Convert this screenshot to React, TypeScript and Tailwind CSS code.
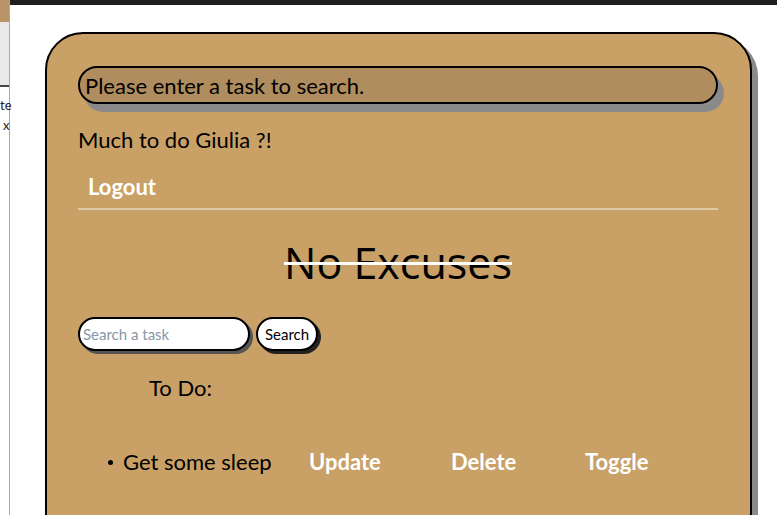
const FONT = { fontFamily: 'Lato, "Noto Sans", sans-serif' };

function SideStrip() {
  return (
    <div className="flex w-[10px] shrink-0 flex-col border-r border-[#a8a8a8] bg-[#ececec]">
      <div className="h-[22px] shrink-0 bg-[#b89466]" />
      <div className="h-[63px] shrink-0 bg-[#e9e9e9]" />
      <div className="h-[2px] shrink-0 bg-[#444]" />
      <div className="flex flex-1 flex-col bg-white pt-[8px] text-[13px] leading-[20px] text-[#222]" style={FONT}>
        <span>te</span>
        <span className="pl-[3px]">x</span>
      </div>
    </div>
  );
}

function TaskRow({ title }: { title: string }) {
  return (
    <li className="flex items-center text-[22px] leading-none">
      <span className="mr-[10px] h-[5px] w-[5px] rounded-full bg-black" />
      <span className="w-[186px] text-black">{title}</span>
      <button className="w-[142px] text-left font-bold text-white">Update</button>
      <button className="w-[134px] text-left font-bold text-white">Delete</button>
      <button className="text-left font-bold text-white">Toggle</button>
    </li>
  );
}

export default function App() {
  return (
    <div className="flex h-[515px] w-[777px] overflow-hidden bg-white" style={FONT}>
      <SideStrip />
      <div className="flex flex-1 flex-col">
        <div className="h-[5px] shrink-0 bg-[#1e1e1e]" />
        <div className="flex-1 pl-[35px] pt-[27px]">
          <div className="h-[560px] w-[707px] rounded-[38px] border-2 border-black bg-[#c9a066] px-[31px] pt-[32px] shadow-[6px_6px_0_#8a8a8a]">
            <div className="flex h-[38px] w-[640px] items-center rounded-full border-2 border-black bg-[#b08d5e] px-[5px] text-[22px] text-black shadow-[6px_8px_0_#8a8a8a]">
              Please enter a task to search.
            </div>

            <p className="mt-[25px] text-[22px] leading-none text-black">Much to do Giulia ?!</p>

            <div className="mt-[25px] w-[640px] border-b-2 border-[#dccaa8] pb-[7px] pl-[10px]">
              <button className="text-[22px] font-bold leading-none text-white">Logout</button>
            </div>

            <div className="mt-[31px] flex w-[640px] justify-center">
              <h1
                className="text-[43px] leading-none text-black line-through decoration-white decoration-[3px]"
                style={{ fontFamily: '"Open Sans", sans-serif' }}
              >
                No Excuses
              </h1>
            </div>

            <div className="mt-[33px] flex items-center gap-[6px]">
              <input
                placeholder="Search a task"
                className="h-[34px] w-[172px] rounded-full border-2 border-black bg-white px-[3px] text-[15px] text-black shadow-[3px_3px_0_#555] outline-none placeholder:text-[#8797a8]"
              />
              <button className="h-[34px] w-[62px] rounded-full border-2 border-black bg-white text-[15px] text-black shadow-[3px_3px_0_#222]">
                Search
              </button>
            </div>

            <p className="mt-[26px] pl-[71px] text-[22px] leading-none text-black">To Do:</p>

            <ul className="mt-[52px] pl-[30px]">
              <TaskRow title="Get some sleep" />
            </ul>
          </div>
        </div>
      </div>
    </div>
  );
}
